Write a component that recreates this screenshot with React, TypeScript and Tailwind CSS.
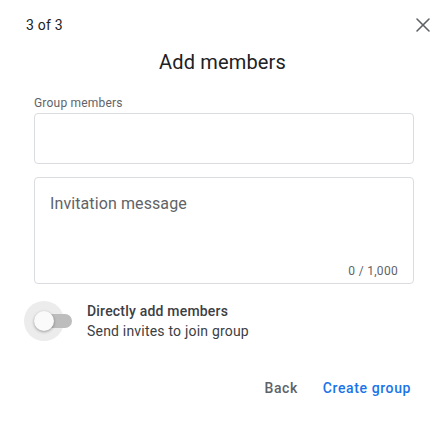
import { X } from 'lucide-react';

function Toggle() {
  return (
    <div className="relative w-[48px] h-[40px] shrink-0">
      <span className="absolute left-0 top-0 w-[40px] h-[40px] rounded-full bg-[#ececec]"></span>
      <span className="absolute left-[14px] top-[13px] w-[34px] h-[14px] rounded-full bg-[#bdbdbd]"></span>
      <span className="absolute left-[10px] top-[10px] w-[20px] h-[20px] rounded-full bg-[#fafafa] shadow-[0_1px_3px_rgba(0,0,0,0.35)]"></span>
    </div>
  );
}

export default function App() {
  return (
    <div className="w-[445px] h-[425px] bg-white text-[#202124] font-['Roboto',sans-serif]">
      <div className="flex items-start justify-between pl-[26px] pr-[10px] pt-[13px]">
        <span className="mt-[2px] text-[14px] leading-[20px] tracking-[0.2px]">3 of 3</span>
        <X className="text-[#5f6368]" size={24} strokeWidth={1.6} />
      </div>

      <h1 className="mt-[11px] text-center text-[20px] leading-[28px] tracking-[0.15px]">Add members</h1>

      <div className="px-[34px] pr-[31px]">
        <div className="mt-[19px] text-[12px] leading-[16px] tracking-[0.2px] text-[#5f6368]">Group members</div>
        <div className="mt-[2px] h-[51px] rounded-[4px] border border-[#dadce0]"></div>

        <div className="mt-[13px] h-[107px] rounded-[4px] border border-[#dadce0] flex flex-col justify-between pl-[15px] pr-[15px] pt-[14px] pb-[4px]">
          <div className="text-[16px] leading-[24px] tracking-[0.1px] text-[#5f6368]">Invitation message</div>
          <div className="text-right text-[12px] leading-[16px] tracking-[0.3px] text-[#5f6368]">0 / 1,000</div>
        </div>
      </div>

      <div className="mt-[17px] flex items-center pl-[24px]">
        <Toggle />
        <div className="ml-[15px] text-[14px] leading-[20px] tracking-[0.2px] text-[#3c4043]">
          <div className="font-medium">Directly add members</div>
          <div>Send invites to join group</div>
        </div>
      </div>

      <div className="mt-[37px] flex justify-end items-center gap-[25px] pr-[34px] text-[14px] leading-[20px] font-medium tracking-[0.6px]">
        <button className="text-[#5f6368]">Back</button>
        <button className="text-[#1a73e8]">Create group</button>
      </div>
    </div>
  );
}
